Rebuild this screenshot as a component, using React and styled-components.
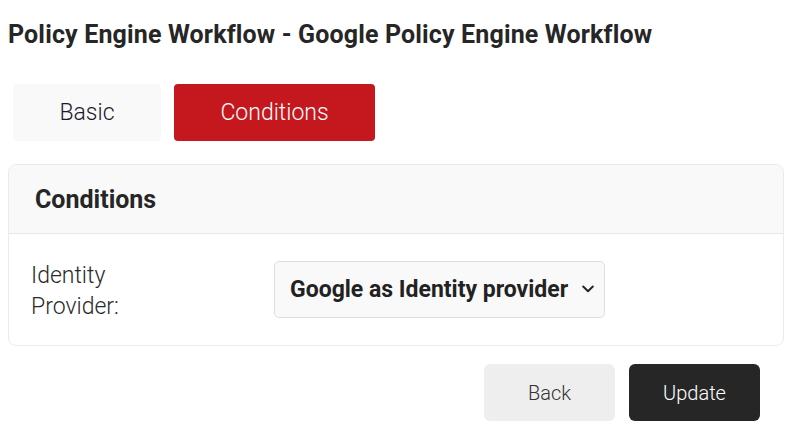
import React, { useState } from 'react';
import styled, { createGlobalStyle } from 'styled-components';

const GlobalStyle = createGlobalStyle`
  body {
    margin: 0;
    background: #fff;
    font-family: Roboto, "Liberation Sans", sans-serif;
    color: #222;
  }
`;

const Page = styled.div`
  padding: 0 11px 0 8px;
`;

const Title = styled.h1`
  font-size: 25px;
  font-weight: 700;
  letter-spacing: 0.15px;
  color: #262626;
  margin: 0;
  padding-top: 20px;
  line-height: 30px;
`;

const Tabs = styled.div`
  display: flex;
  gap: 13px;
  margin: 34px 0 23px 5px;
`;

const Tab = styled.button`
  height: 57px;
  border: none;
  border-radius: 4px;
  font-family: Roboto, "Liberation Sans", sans-serif;
  font-size: 23px;
  font-weight: 300;
  cursor: pointer;
  width: ${({ $width }) => $width}px;
  background: ${({ $active }) => ($active ? '#c4171e' : '#f9f9f9')};
  color: ${({ $active }) => ($active ? '#fff' : '#1a1a2a')};
`;

const Card = styled.div`
  border: 1px solid #ebebeb;
  border-radius: 8px;
  overflow: hidden;
`;

const CardHeader = styled.div`
  height: 68px;
  display: flex;
  align-items: center;
  padding-left: 26px;
  background: #f9f9f9;
  border-bottom: 1px solid #e8e8e8;
  font-size: 25px;
  font-weight: 700;
  color: #262626;
`;

const CardBody = styled.div`
  display: flex;
  align-items: center;
  padding: 22px 22px 23px;
`;

const Label = styled.label`
  width: 243px;
  flex-shrink: 0;
  padding-top: 4px;
  font-size: 23px;
  font-weight: 300;
  line-height: 31px;
  color: #2a2a2a;

  span {
    display: block;
    width: 120px;
  }
`;

const SelectBox = styled.div`
  display: flex;
  align-items: center;
  gap: 14px;
  height: 55px;
  padding: 0 10px 0 15px;
  background: #f9f9f9;
  border: 1px solid #dedede;
  border-radius: 5px;
  font-size: 23px;
  font-weight: 700;
  color: #222;
  cursor: pointer;
`;

const Footer = styled.div`
  display: flex;
  justify-content: flex-end;
  gap: 14px;
  margin: 18px 24px 0 0;
`;

const ActionButton = styled.button`
  width: 131px;
  height: 57px;
  border: none;
  border-radius: 6px;
  font-family: Roboto, "Liberation Sans", sans-serif;
  font-size: 20px;
  font-weight: 300;
  cursor: pointer;
  background: ${({ $dark }) => ($dark ? '#262626' : '#eeeeee')};
  color: ${({ $dark }) => ($dark ? '#fff' : '#333')};
`;

const Chevron = () => (
  <svg width="12" height="8" viewBox="0 0 12 8" fill="none" stroke="#222" strokeWidth="1.9" strokeLinecap="round" strokeLinejoin="round">
    <polyline points="1.2 1.5 6 6.2 10.8 1.5" />
  </svg>
);

export default function App() {
  const [tab, setTab] = useState('conditions');

  return (
    <Page>
      <GlobalStyle />
      <Title>Policy Engine Workflow - Google Policy Engine Workflow</Title>
      <Tabs>
        <Tab $width={148} $active={tab === 'basic'} onClick={() => setTab('basic')}>Basic</Tab>
        <Tab $width={201} $active={tab === 'conditions'} onClick={() => setTab('conditions')}>Conditions</Tab>
      </Tabs>
      <Card>
        <CardHeader>Conditions</CardHeader>
        <CardBody>
          <Label><span>Identity Provider:</span></Label>
          <SelectBox>
            Google as Identity provider
            <Chevron />
          </SelectBox>
        </CardBody>
      </Card>
      <Footer>
        <ActionButton>Back</ActionButton>
        <ActionButton $dark>Update</ActionButton>
      </Footer>
    </Page>
  );
}
